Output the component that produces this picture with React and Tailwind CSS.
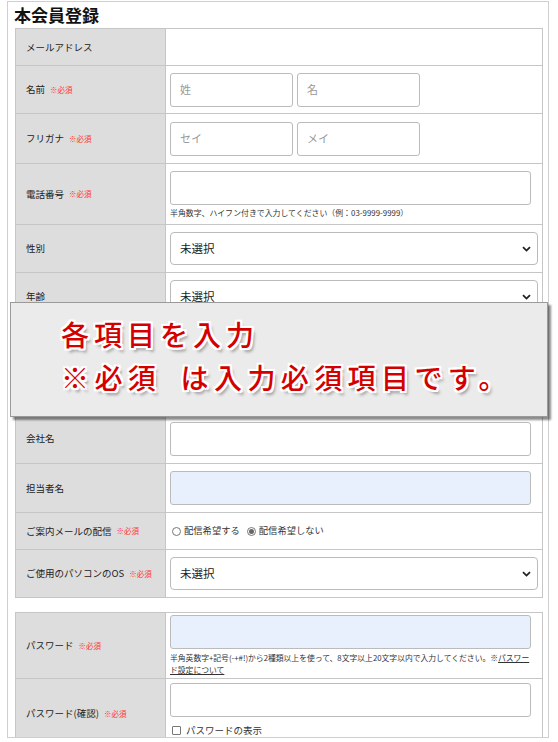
import React from "react";

const Req = () => (
    <span className="ml-[5px] text-[7.5px] text-[#ff3333]">※必須</span>
);

function Chevron() {
    return (
        <svg className="absolute right-[6px] top-1/2 -translate-y-1/2" width="9" height="6" viewBox="0 0 9 6">
            <path d="M1 1.2 L4.5 4.6 L8 1.2" fill="none" stroke="#222" strokeWidth="1.8" />
        </svg>
    );
}

function Select() {
    return (
        <div className="relative w-[368px] h-[33px] border border-[#bbb] rounded-[4px] bg-white flex items-center pl-[9px] text-[11.5px] text-[#222]">
            未選択
            <Chevron />
        </div>
    );
}

function Input({ w = "w-[361px]", blue = false, ph = "" }) {
    return (
        <div
            className={`${w} h-[34px] border border-[#bbb] rounded-[3px] flex items-center pl-[9px] text-[11px] text-[#999] ${
                blue ? "bg-[#e8f0fe]" : "bg-white"
            }`}
        >
            {ph}
        </div>
    );
}

function Row({ h, label, req, children }) {
    return (
        <div className={`flex ${h} border-b border-[#c6c6c6]`}>
            <div className="w-[150px] shrink-0 bg-[#dddddd] border-r border-[#c6c6c6] flex items-center pl-[10px] text-[9.5px] text-[#222]">
                {label}
                {req && <Req />}
            </div>
            <div className="flex-1 flex flex-col justify-center pl-[4px]">{children}</div>
        </div>
    );
}

export default function App() {
    const outline =
        "[text-shadow:2px_0_0_#fff,-2px_0_0_#fff,0_2px_0_#fff,0_-2px_0_#fff,2px_2px_0_#fff,-2px_-2px_0_#fff,2px_-2px_0_#fff,-2px_2px_0_#fff,3px_4px_3px_rgba(0,0,0,0.35)]";
    return (
        <div className="w-[558px] h-[742px] bg-white relative overflow-hidden font-['Noto_Sans_CJK_JP','Noto_Sans',sans-serif]">
            <div className="ml-[7px] mt-[1px] w-[542px] h-[737px] border border-[#cfcfcf] pl-[7px] overflow-hidden">
                <h2 className="text-[17px] font-bold leading-[26px] text-[#111] -ml-[1px]">本会員登録</h2>

                <div className="w-[528px] border-t border-l border-r border-[#c6c6c6]">
                    <Row h="h-[37px]" label="メールアドレス" />
                    <Row h="h-[48px]" label="名前" req>
                        <div className="flex gap-[4px]">
                            <Input w="w-[123px]" ph="姓" />
                            <Input w="w-[123px]" ph="名" />
                        </div>
                    </Row>
                    <Row h="h-[50px]" label="フリガナ" req>
                        <div className="flex gap-[4px]">
                            <Input w="w-[123px]" ph="セイ" />
                            <Input w="w-[123px]" ph="メイ" />
                        </div>
                    </Row>
                    <Row h="h-[61px]" label="電話番号" req>
                        <Input />
                        <p className="mt-[3px] text-[7.9px] text-[#333] leading-[10px]">
                            半角数字、ハイフン付きで入力してください（例：03-9999-9999）
                        </p>
                    </Row>
                    <Row h="h-[48px]" label="性別">
                        <Select />
                    </Row>
                    <Row h="h-[48px]" label="年齢">
                        <Select />
                    </Row>
                    <Row h="h-[46px]" label="都道府県">
                        <Select />
                    </Row>
                    <Row h="h-[47px]" label="職業">
                        <Select />
                    </Row>
                    <Row h="h-[50px]" label="会社名">
                        <Input />
                    </Row>
                    <Row h="h-[49px]" label="担当者名">
                        <Input blue />
                    </Row>
                    <Row h="h-[37px]" label="ご案内メールの配信" req>
                        <div className="flex items-center text-[9.3px] text-[#333] pl-[2px]">
                            <span className="w-[9px] h-[9px] rounded-full border border-[#777] bg-white" />
                            <span className="ml-[3px]">配信希望する</span>
                            <span className="ml-[7px] w-[9px] h-[9px] rounded-full border border-[#777] bg-white flex items-center justify-center">
                                <span className="w-[5px] h-[5px] rounded-full bg-[#666]" />
                            </span>
                            <span className="ml-[3px]">配信希望しない</span>
                        </div>
                    </Row>
                    <Row h="h-[48px]" label="ご使用のパソコンのOS" req>
                        <Select />
                    </Row>
                </div>

                <div className="mt-[14px] w-[528px] border-t border-l border-r border-[#c6c6c6]">
                    <Row h="h-[66px]" label="パスワード" req>
                        <Input blue />
                        <p className="mt-[3px] text-[7.8px] text-[#333] leading-[12px] w-[364px]">
                            半角英数字+記号(-+#!)から2種類以上を使って、8文字以上20文字以内で入力してください。※
                            <span className="underline">パスワード設定について</span>
                        </p>
                    </Row>
                    <div className="flex h-[70px] border-b border-[#c6c6c6]">
                        <div className="w-[150px] shrink-0 bg-[#dddddd] border-r border-[#c6c6c6] flex items-center pl-[10px] text-[9.5px] text-[#222]">
                            パスワード(確認)
                            <Req />
                        </div>
                        <div className="flex-1 pl-[4px] pt-[4px]">
                            <Input />
                            <div className="flex items-center mt-[6px] pl-[2px] text-[9.5px] text-[#333]">
                                <span className="w-[9px] h-[9px] border border-[#777] rounded-[1px] bg-white" />
                                <span className="ml-[5px]">パスワードの表示</span>
                            </div>
                        </div>
                    </div>
                </div>
            </div>

            <div className="absolute left-[10px] top-[302px] w-[538px] h-[115px] bg-[#ebebeb] border border-[#9a9a9a] shadow-[3px_3px_2px_rgba(0,0,0,0.45)] pl-[50px] pt-[10px]">
                <p className={`text-[28px] leading-[43px] tracking-[5px] font-medium text-[#d40000] ${outline}`}>
                    各項目を入力
                </p>
                <p className={`text-[28px] leading-[43px] tracking-[5.4px] font-medium text-[#d40000] ${outline}`}>
                    ※必須{"\u2002"}は入力必須項目です。
                </p>
            </div>
        </div>
    );
}
